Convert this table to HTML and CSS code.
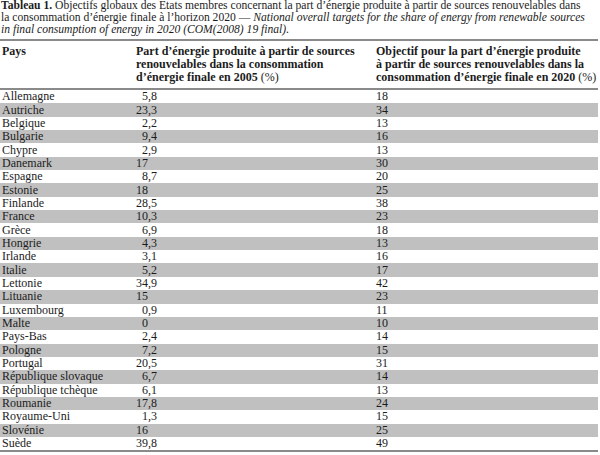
FILE: index.html
```html
<!DOCTYPE html>
<html lang="fr">
<head>
    <meta charset="UTF-8">
    <meta name="viewport" content="width=device-width, initial-scale=1.0">
    <title>Tableau 1</title>
    <link rel="stylesheet" href="styles.css">
</head>
<body>

    <p class="caption">
        <b>Tableau 1.</b> Objectifs globaux des États membres concernant la part d’énergie produite à partir de sources renouvelables dans<br>
        la consommation d’énergie finale à l’horizon 2020 — <i>National overall targets for the share of energy from renewable sources<br>
        in final consumption of energy in 2020 (COM(2008) 19 final).</i>
    </p>

    <table class="targets">
        <thead>
            <tr>
                <th class="col-pays">Pays</th>
                <th class="col-2005">Part d’énergie produite à partir de sources<br>renouvelables dans la consommation<br>d’énergie finale en 2005 <span class="unit">(%)</span></th>
                <th class="col-2020">Objectif pour la part d’énergie produite<br>à partir de sources renouvelables dans la<br>consommation d’énergie finale en 2020 <span class="unit">(%)</span></th>
            </tr>
        </thead>
        <tbody id="rows"></tbody>
    </table>

    <script>
        // Pays, part 2005, objectif 2020
        let data = [
            ['Allemagne', '5,8', '18'],
            ['Autriche', '23,3', '34'],
            ['Belgique', '2,2', '13'],
            ['Bulgarie', '9,4', '16'],
            ['Chypre', '2,9', '13'],
            ['Danemark', '17', '30'],
            ['Espagne', '8,7', '20'],
            ['Estonie', '18', '25'],
            ['Finlande', '28,5', '38'],
            ['France', '10,3', '23'],
            ['Grèce', '6,9', '18'],
            ['Hongrie', '4,3', '13'],
            ['Irlande', '3,1', '16'],
            ['Italie', '5,2', '17'],
            ['Lettonie', '34,9', '42'],
            ['Lituanie', '15', '23'],
            ['Luxembourg', '0,9', '11'],
            ['Malte', '0', '10'],
            ['Pays-Bas', '2,4', '14'],
            ['Pologne', '7,2', '15'],
            ['Portugal', '20,5', '31'],
            ['République slovaque', '6,7', '14'],
            ['République tchèque', '6,1', '13'],
            ['Roumanie', '17,8', '24'],
            ['Royaume-Uni', '1,3', '15'],
            ['Slovénie', '16', '25'],
            ['Suède', '39,8', '49']
        ];

        let tbody = document.getElementById('rows');

        data.forEach(row => {
            let parts = row[1].split(',');
            let decimals = parts.length > 1 ? ',' + parts[1] : '';
            let tr = document.createElement('tr');
            tr.innerHTML =
                '<td class="col-pays">' + row[0] + '</td>' +
                '<td class="col-2005"><span class="int">' + parts[0] + '</span>' + decimals + '</td>' +
                '<td class="col-2020">' + row[2] + '</td>';
            tbody.appendChild(tr);
        });
    </script>
</body>
</html>
```

FILE: styles.css
```css
body {
    margin: 0;
    background-color: #fff;
    color: #1c1c1c;
    font-family: "Liberation Serif", "Times New Roman", serif;
    font-size: 12px;
}

.caption {
    margin: 0 0 3px 1px;
    font-size: 11.6px;
    line-height: 12px;
    white-space: nowrap;
}

.targets {
    width: 598px;
    border-collapse: collapse;
    table-layout: fixed;
    border-top: 2px solid #8a8a8a;
    border-bottom: 2px solid #8a8a8a;
}

.targets th {
    font-weight: bold;
    text-align: left;
    vertical-align: top;
    line-height: 13px;
    padding: 4px 0;
    border-bottom: 2px solid #8a8a8a;
    white-space: nowrap;
}

.targets th .unit {
    font-weight: normal;
}

.targets td {
    height: 13.35px;
    line-height: 13px;
    padding: 0;
    white-space: nowrap;
}

.targets tbody tr:nth-child(even) td {
    background-color: #c0c0c0;
}

.col-pays {
    width: 134px;
    padding-left: 2px !important;
}

.col-2005 {
    width: 240px;
    padding-left: 0 !important;
}

.col-2020 {
    padding-left: 0 !important;
}

.int {
    display: inline-block;
    width: 12px;
    text-align: right;
}
```
